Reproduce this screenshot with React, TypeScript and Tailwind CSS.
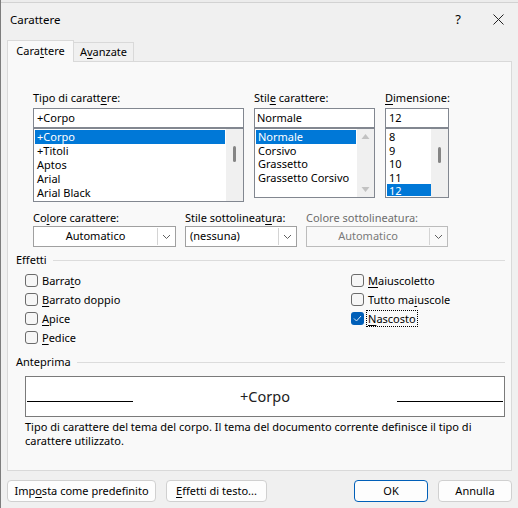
import React from 'react';

// Small helper: underline one character (the mnemonic) inside a label
const Mn = ({ text, at }: { text: string; at: number }) => {
  if (at < 0) return <>{text}</>;
  return (
    <>
      {text.slice(0, at)}
      <span className="underline underline-offset-2">{text[at]}</span>
      {text.slice(at + 1)}
    </>
  );
};

const Chevron = ({ color = '#5f5f5f' }: { color?: string }) => (
  <svg width="9" height="6" viewBox="0 0 9 6">
    <path d="M1 1 L4.5 4.5 L8 1" fill="none" stroke={color} strokeWidth="1" />
  </svg>
);

const Thumb = ({ top }: { top: number }) => (
  <div className="flex flex-col items-center" style={{ paddingTop: top }}>
    <div className="w-[3px] h-[16px] bg-[#858585] rounded-sm" />
  </div>
);

const ListBox = ({
  items,
  selected,
  width,
  height,
  rowH,
  scroll,
}: {
  items: string[];
  selected: number;
  width: number;
  height: number;
  rowH: number;
  scroll: 'thumb' | 'arrows';
}) => (
  <div className="flex border border-[#828790] bg-white" style={{ width, height }}>
    <div className="flex-1 flex flex-col pt-[1px] pl-[1px] pr-[1px] overflow-hidden">
      {items.map((it, i) => (
        <div
          key={it}
          className={`pl-[2px] whitespace-nowrap ${i === selected ? 'bg-[#0078d7] text-white' : 'text-black'}`}
          style={{ height: rowH, lineHeight: `${rowH}px` }}
        >
          {it}
        </div>
      ))}
    </div>
    <div className="w-[17px] bg-[#f0f0f0] flex flex-col justify-between items-center">
      {scroll === 'thumb' ? (
        <Thumb top={17} />
      ) : (
        <>
          <svg width="9" height="14" viewBox="0 0 9 14" className="mt-[1px]">
            <path d="M0.5 9 L4.5 4 L8.5 9 Z" fill="#c2c2c2" />
          </svg>
          <svg width="9" height="14" viewBox="0 0 9 14" className="mb-[1px]">
            <path d="M0.5 5 L4.5 10 L8.5 5 Z" fill="#c2c2c2" />
          </svg>
        </>
      )}
    </div>
  </div>
);

const Select = ({
  value,
  width,
  center,
  disabled,
}: {
  value: string;
  width: number;
  center?: boolean;
  disabled?: boolean;
}) => (
  <div
    className={`h-[21px] flex border ${disabled ? 'border-[#bcbcbc] bg-[#f9f9f9] text-[#7a7a7a]' : 'border-[#a0a0a0] bg-white text-black'}`}
    style={{ width }}
  >
    <div className={`flex-1 flex items-center ${center ? 'justify-center' : 'pl-[4px]'}`}>{value}</div>
    <div className="w-[17px] my-[1px] mr-[1px] border-l border-[#d4d4d4] flex items-center justify-center">
      <Chevron />
    </div>
  </div>
);

const Check = ({ label, at, checked, focus }: { label: string; at: number; checked?: boolean; focus?: boolean }) => (
  <div className="h-[19px] flex items-center">
    {checked ? (
      <div className="w-[13px] h-[13px] rounded-[3px] bg-[#005fb8] flex items-center justify-center">
        <svg width="9" height="7" viewBox="0 0 9 7">
          <path d="M1 3.5 L3.5 6 L8 1" fill="none" stroke="#d8e6f5" strokeWidth="1" />
        </svg>
      </div>
    ) : (
      <div className="w-[13px] h-[13px] rounded-[3px] border border-[#6b6b6b] bg-[#f6f6f6]" />
    )}
    <span className={`ml-[3px] px-[1px] leading-[15px] ${focus ? 'outline outline-1 outline-dotted outline-black' : ''}`}>
      <Mn text={label} at={at} />
    </span>
  </div>
);

const Btn = ({ children, width, primary }: { children: React.ReactNode; width: number; primary?: boolean }) => (
  <div
    className={`h-[22px] rounded-[4px] bg-[#fdfdfd] flex items-center justify-center border whitespace-nowrap ${primary ? 'border-[#005fb8]' : 'border-[#d0d0d0]'}`}
    style={{ width }}
  >
    {children}
  </div>
);

export default function App() {
  return (
    <div
      className="w-[518px] h-[508px] bg-[#f0f0f0] border-l border-[#7d7d7d] text-[11px] text-black flex flex-col overflow-hidden"
      style={{ fontFamily: '"Noto Sans", "Segoe UI", sans-serif' }}
    >
      {/* title bar */}
      <div className="h-[3px] bg-[#ececec] border-b border-[#d2d2d2]" />
      <div className="h-[33px] flex items-center justify-between pl-[9px] pr-[14px] text-[11.5px]">
        <span>Carattere</span>
        <div className="flex items-center gap-[32px]">
          <span className="text-[13px]">?</span>
          <svg width="11" height="11" viewBox="0 0 11 11">
            <path d="M0.5 0.5 L10.5 10.5 M10.5 0.5 L0.5 10.5" stroke="#222" strokeWidth="1" />
          </svg>
        </div>
      </div>

      {/* tabs */}
      <div className="flex items-end pl-[6px] h-[22px] mt-[3px]">
        <div className="h-[22px] w-[67px] bg-[#f9f9f9] border border-b-0 border-[#d9d9d9] flex items-center justify-center relative top-[1px]">
          <Mn text="Carattere" at={4} />
        </div>
        <div className="h-[19px] w-[60px] bg-[#f0f0f0] border border-l-0 border-b-0 border-[#d9d9d9] flex items-center justify-center">
          <Mn text="Avanzate" at={1} />
        </div>
      </div>

      {/* panel */}
      <div className="mx-[6px] w-[505px] h-[410px] bg-[#f9f9f9] border border-[#d9d9d9] flex flex-col">
        <div className="flex gap-[10px] pl-[25px] pt-[27px]">
          <div className="flex flex-col">
            <div className="h-[17px] leading-[17px] mb-[2px]">
              <Mn text="Tipo di carattere:" at={14} />
            </div>
            <div className="w-[211px] h-[20px] border border-[#828790] bg-white pl-[3px] flex items-center">+Corpo</div>
            <ListBox items={['+Corpo', '+Titoli', 'Aptos', 'Arial', 'Arial Black']} selected={0} width={211} height={74} rowH={14} scroll="thumb" />
          </div>
          <div className="flex flex-col">
            <div className="h-[17px] leading-[17px] mb-[2px]">
              <Mn text="Stile carattere:" at={4} />
            </div>
            <div className="w-[121px] h-[20px] border border-[#828790] bg-white pl-[2px] flex items-center">Normale</div>
            <ListBox items={['Normale', 'Corsivo', 'Grassetto', 'Grassetto Corsivo']} selected={0} width={121} height={70} rowH={13.5} scroll="arrows" />
          </div>
          <div className="flex flex-col">
            <div className="h-[17px] leading-[17px] mb-[2px]">
              <Mn text="Dimensione:" at={0} />
            </div>
            <div className="w-[64px] h-[20px] border border-[#828790] bg-white pl-[3px] flex items-center">12</div>
            <div className="w-[64px] h-[70px] flex border border-[#828790] bg-white">
              <div className="flex-1 flex flex-col pl-[1px] pt-[1px] overflow-hidden">
                <div className="h-[13.5px] leading-[13.5px] pl-[2px]">8</div>
                <div className="h-[13.5px] leading-[13.5px] pl-[2px]">9</div>
                <div className="h-[13.5px] leading-[13.5px] pl-[2px]">10</div>
                <div className="h-[13.5px] leading-[13.5px] pl-[2px]">11</div>
                <div className="h-[12px] leading-[13px] pl-[2px] bg-[#0078d7] text-white">12</div>
              </div>
              <div className="w-[17px] bg-[#f0f0f0]">
                <Thumb top={18} />
              </div>
            </div>
          </div>
        </div>

        {/* colour / underline row */}
        <div className="flex gap-[9px] pl-[25px] mt-[7px]">
          <div className="flex flex-col">
            <div className="h-[17px] leading-[17px]">
              <Mn text="Colore carattere:" at={2} />
            </div>
            <Select value="Automatico" width={143} center />
          </div>
          <div className="flex flex-col">
            <div className="h-[17px] leading-[17px]">
              <Mn text="Stile sottolineatura:" at={17} />
            </div>
            <Select value="(nessuna)" width={112} />
          </div>
          <div className="flex flex-col">
            <div className="h-[17px] leading-[17px] text-[#6d6d6d]">Colore sottolineatura:</div>
            <Select value="Automatico" width={142} center disabled />
          </div>
        </div>

        {/* Effetti */}
        <div className="flex items-center pl-[8px] pr-[6px] mt-[5px] h-[17px]">
          <span>Effetti</span>
          <div className="flex-1 h-px bg-[#dcdcdc] ml-[6px]" />
        </div>
        <div className="flex pl-[17px] mt-[2px]">
          <div className="w-[326px] flex flex-col">
            <Check label="Barrato" at={5} />
            <Check label="Barrato doppio" at={0} />
            <Check label="Apice" at={0} />
            <Check label="Pedice" at={0} />
          </div>
          <div className="flex flex-col">
            <Check label="Maiuscoletto" at={0} />
            <Check label="Tutto maiuscole" at={8} />
            <Check label="Nascosto" at={0} checked focus />
          </div>
        </div>

        {/* Anteprima */}
        <div className="flex items-center pl-[8px] pr-[6px] mt-[7px] h-[17px]">
          <span>Anteprima</span>
          <div className="flex-1 h-px bg-[#dcdcdc] ml-[6px]" />
        </div>
        <div className="ml-[17px] mt-[5px] w-[480px] h-[41px] border border-[#7a7a7a] bg-white flex items-center justify-between px-[1px]">
          <div className="w-[106px] h-px bg-black mt-[10px]" />
          <span className="text-[14.5px] text-[#222]">+Corpo</span>
          <div className="w-[106px] h-px bg-black mt-[10px]" />
        </div>
        <p className="ml-[17px] mt-[3px] w-[460px] leading-[14px]">
          Tipo di carattere del tema del corpo. Il tema del documento corrente definisce il tipo di carattere utilizzato.
        </p>
      </div>

      {/* buttons */}
      <div className="flex items-center mt-[9px] px-[6px]">
        <Btn width={149}>
          <Mn text="Imposta come predefinito" at={3} />
        </Btn>
        <div className="ml-[10px]">
          <Btn width={101}>
            <Mn text="Effetti di testo..." at={0} />
          </Btn>
        </div>
        <div className="ml-auto flex gap-[10px]">
          <Btn width={74} primary>OK</Btn>
          <Btn width={74}>Annulla</Btn>
        </div>
      </div>
    </div>
  );
}
